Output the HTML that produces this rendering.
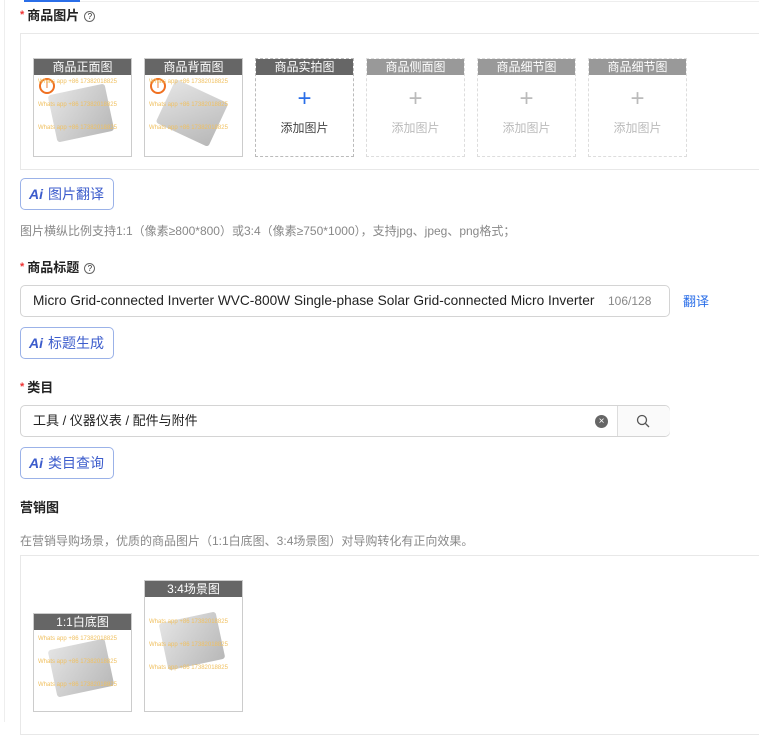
<!DOCTYPE html><html><head><meta charset="utf-8"><style>
*{box-sizing:border-box;margin:0;padding:0}
body{width:759px;height:722px;overflow:hidden;background:#fff;font-family:"Liberation Sans","Noto Sans CJK SC",sans-serif;position:relative;color:#333}
.a{position:absolute}
.lbl{font-size:13px;font-weight:bold;color:#222;line-height:18px}
.req{color:#e33;font-size:11px;margin-right:3px;position:relative;top:-2px}
.q{display:inline-block;width:11px;height:11px;border:1px solid #666;border-radius:50%;font-size:8px;text-align:center;line-height:9px;margin-left:5px;font-weight:normal;vertical-align:1px}
.box{border:1px solid #e8e8e8}
.img{border:1px solid #ccc;overflow:hidden;background:#fff}
.hd{height:16px;background:#666;color:#fff;font-size:12px;text-align:center;line-height:16px}
.add{border:1px dashed #bbb}
.dim{border:1px dashed #ddd}
.dim .hd{background:#999}
.plus{text-align:center;font-size:24px;color:#2a6ee8;margin-top:10px;line-height:28px}
.dim .plus{color:#bbb}
.at{text-align:center;font-size:12px;color:#444;margin-top:6px}
.dim .at{color:#bbb}
.ai{border:1px solid #9bb2e8;border-radius:5px;height:32px;width:94px;color:#3c5ccc;font-size:14px;line-height:30px;padding-left:8px}
.ai b{font-style:italic;font-weight:900;margin-right:5px}
.hint{font-size:12px;color:#888}
.inp{border:1px solid #d4d4d4;border-radius:5px;height:32px;font-size:13px;line-height:30px;padding-left:12px;color:#222}
.dev{position:absolute;left:18px;top:14px;width:58px;height:48px;background:linear-gradient(135deg,#e4e4e4,#b8b8b8);transform:rotate(-12deg);border-radius:3px}
.wm{position:absolute;left:4px;font-size:6px;color:#f0c060}
</style></head><body>
<div class="a" style="left:4px;top:0;width:1px;height:722px;background:#eee"></div>
<div class="a" style="left:24px;top:0;width:56px;height:2px;background:#2a6ee8"></div>
<div class="a" style="left:80px;top:1px;width:679px;height:1px;background:#eee"></div>
<div class="a lbl" style="left:20px;top:7px"><span class="req">*</span>商品图片<span class="q">?</span></div>
<div class="a box" style="left:20px;top:33px;width:745px;height:137px"></div>
<div class="a img" style="left:33px;top:58px;width:99px;height:99px"><div class="hd">商品正面图</div><div style="position:relative;height:82px"><div class="dev"></div><div class="a" style="left:5px;top:3px;width:16px;height:16px;border:2px solid #f07020;border-radius:50%;color:#f07020;font-size:10px;text-align:center;line-height:12px">i</div><div class="wm" style="top:4px">Whats app +86 17382018825</div><div class="wm" style="top:27px">Whats app +86 17382018825</div><div class="wm" style="top:50px">Whats app +86 17382018825</div></div></div>
<div class="a img" style="left:144px;top:58px;width:99px;height:99px"><div class="hd">商品背面图</div><div style="position:relative;height:82px"><div class="dev" style="transform:rotate(25deg)"></div><div class="a" style="left:5px;top:3px;width:16px;height:16px;border:2px solid #f07020;border-radius:50%;color:#f07020;font-size:10px;text-align:center;line-height:12px">i</div><div class="wm" style="top:4px">Whats app +86 17382018825</div><div class="wm" style="top:27px">Whats app +86 17382018825</div><div class="wm" style="top:50px">Whats app +86 17382018825</div></div></div>
<div class="a add" style="left:255px;top:58px;width:99px;height:99px"><div class="hd">商品实拍图</div><div class="plus">+</div><div class="at">添加图片</div></div>
<div class="a dim" style="left:366px;top:58px;width:99px;height:99px"><div class="hd">商品侧面图</div><div class="plus">+</div><div class="at">添加图片</div></div>
<div class="a dim" style="left:477px;top:58px;width:99px;height:99px"><div class="hd">商品细节图</div><div class="plus">+</div><div class="at">添加图片</div></div>
<div class="a dim" style="left:588px;top:58px;width:99px;height:99px"><div class="hd">商品细节图</div><div class="plus">+</div><div class="at">添加图片</div></div>
<div class="a ai" style="left:20px;top:178px"><b>Ai</b>图片翻译</div>
<div class="a hint" style="left:20px;top:222px">图片横纵比例支持1:1（像素≥800*800）或3:4（像素≥750*1000），支持jpg、jpeg、png格式；</div>
<div class="a lbl" style="left:20px;top:259px"><span class="req">*</span>商品标题<span class="q">?</span></div>
<div class="a inp" style="left:20px;top:285px;width:650px;height:32px;font-size:13.7px"><span style="display:inline-block;width:565px;overflow:hidden;white-space:nowrap;vertical-align:top">Micro Grid-connected Inverter WVC-800W Single-phase Solar Grid-connected Micro Inverter</span><span style="position:absolute;left:587px;font-size:12px;color:#888">106/128</span></div>
<div class="a" style="left:683px;top:291px;font-size:13px;color:#2a6ee8">翻译</div>
<div class="a ai" style="left:20px;top:327px"><b>Ai</b>标题生成</div>
<div class="a lbl" style="left:20px;top:379px"><span class="req">*</span>类目</div>
<div class="a inp" style="left:20px;top:405px;width:650px;height:32px">工具 / 仪器仪表 / 配件与附件
<div class="a" style="left:574px;top:9px;width:13px;height:13px;border-radius:50%;background:#666;color:#fff;font-size:10px;line-height:13px;text-align:center">×</div>
<div class="a" style="left:596px;top:0;width:53px;height:30px;border-left:1px solid #ddd;background:#fafafa;border-radius:0 5px 5px 0"><svg width="14" height="14" style="position:absolute;left:18px;top:8px" viewBox="0 0 14 14"><circle cx="6" cy="6" r="4.5" fill="none" stroke="#555" stroke-width="1.3"/><path d="M9.5 9.5L13 13" stroke="#555" stroke-width="1.3"/></svg></div></div>
<div class="a ai" style="left:20px;top:447px"><b>Ai</b>类目查询</div>
<div class="a lbl" style="left:20px;top:499px">营销图</div>
<div class="a hint" style="left:20px;top:532px">在营销导购场景，优质的商品图片（1:1白底图、3:4场景图）对导购转化有正向效果。</div>
<div class="a box" style="left:20px;top:555px;width:745px;height:180px"></div>
<div class="a img" style="left:33px;top:613px;width:99px;height:99px"><div class="hd">1:1白底图</div><div style="position:relative;height:82px"><div class="dev"></div><div class="wm" style="top:6px">Whats app +86 17382018825</div><div class="wm" style="top:29px">Whats app +86 17382018825</div><div class="wm" style="top:52px">Whats app +86 17382018825</div></div></div>
<div class="a img" style="left:144px;top:580px;width:99px;height:132px"><div class="hd">3:4场景图</div><div style="position:relative;height:115px"><div class="dev" style="top:20px"></div><div class="wm" style="top:22px">Whats app +86 17382018825</div><div class="wm" style="top:45px">Whats app +86 17382018825</div><div class="wm" style="top:68px">Whats app +86 17382018825</div></div></div>
</body></html>
